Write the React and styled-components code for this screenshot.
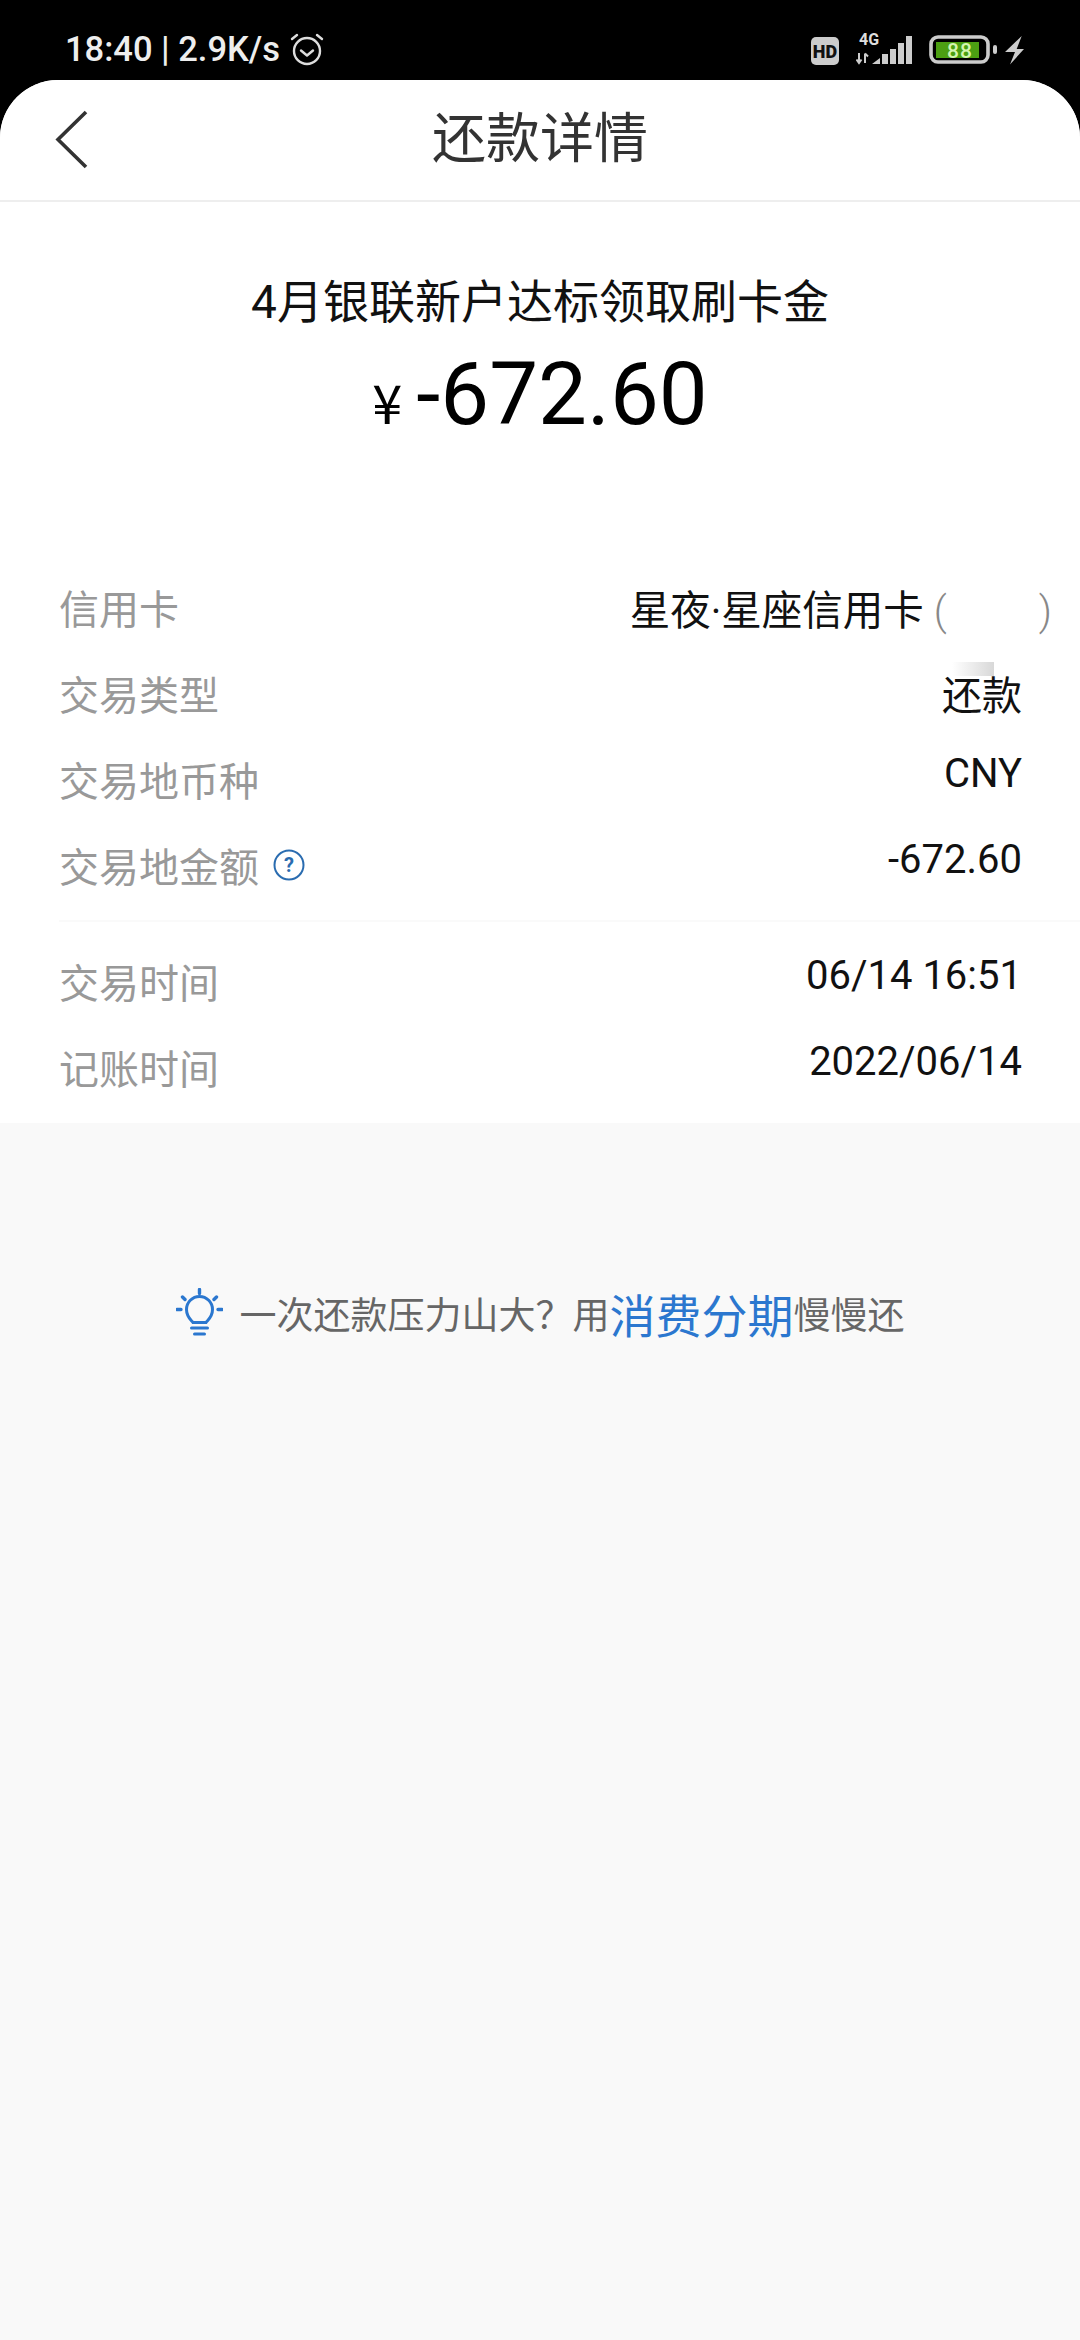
import React from "react";
import styled, { createGlobalStyle } from "styled-components";

const GlobalStyle = createGlobalStyle`
  html, body {
    margin: 0;
    padding: 0;
    background: #000;
    font-family: Roboto, "Noto Sans CJK SC", sans-serif;
  }
`;

const Page = styled.div`
  width: 1080px;
  height: 2340px;
  display: flex;
  flex-direction: column;
  background: #000;
  overflow: hidden;
`;

const StatusBar = styled.div`
  height: 80px;
  flex-shrink: 0;
  display: flex;
  align-items: center;
  justify-content: space-between;
  padding: 18px 56px 0 65px;
  box-sizing: border-box;
`;

const StatusLeft = styled.div`
  display: flex;
  align-items: center;
  gap: 9px;
  color: #eee;
  font-size: 34.5px;
  font-weight: 500;
`;

const StatusRight = styled.div`
  display: flex;
  align-items: flex-end;
  gap: 17px;
  margin-top: -6px;
`;

const Sheet = styled.div`
  flex: 1;
  display: flex;
  flex-direction: column;
  background: #f9f9f9;
  border-radius: 58px 58px 0 0;
  overflow: hidden;
`;

const Header = styled.div`
  height: 120px;
  flex-shrink: 0;
  display: grid;
  grid-template-columns: 1fr auto 1fr;
  align-items: center;
  background: #fff;
  border-bottom: 2px solid #eeeeee;
  box-sizing: content-box;
`;

const BackButton = styled.div`
  display: flex;
  padding-left: 54px;
`;

const HeaderTitle = styled.div`
  font-size: 54px;
  line-height: 120px;
  color: #333;
`;

const Card = styled.div`
  background: #fff;
  height: 921px;
  display: flex;
  flex-direction: column;
`;

const Summary = styled.div`
  height: 362px;
  flex-shrink: 0;
  display: flex;
  flex-direction: column;
  align-items: center;
  padding-top: 66px;
  box-sizing: border-box;
`;

const SummaryTitle = styled.div`
  font-size: 46px;
  line-height: 68px;
  color: #111;
`;

const Amount = styled.div`
  display: flex;
  align-items: baseline;
  gap: 14px;
  margin-top: -2px;
  color: #000;
  line-height: 120px;
`;

const Currency = styled.span`
  font-size: 54px;
  font-family: "Noto Sans CJK SC", sans-serif;
`;

const AmountValue = styled.span`
  font-size: 87px;
`;

const Row = styled.div`
  position: relative;
  height: 86px;
  display: flex;
  align-items: center;
  justify-content: space-between;
  padding: 0 ${(p) => (p.$wide ? "28px" : "58px")} 0 59px;
`;

const Label = styled.div`
  display: flex;
  align-items: center;
  gap: 14px;
  font-size: 40px;
  color: #999;
`;

const Value = styled.div`
  font-size: ${(p) => p.$size || 40}px;
  color: #111;
  padding-bottom: ${(p) => p.$lift || 0}px;
`;

const Bracket = styled.span`
  color: #888;
  font-weight: 300;
`;

const Masked = styled.span`
  display: inline-block;
  width: 92px;
`;

const Smudge = styled.div`
  position: absolute;
  top: 12px;
  right: 86px;
  width: 42px;
  height: 14px;
  background: linear-gradient(90deg, #fff, #d8d8d8);
`;

const Divider = styled.div`
  height: 2px;
  margin: 12px 0 16px 59px;
  background: #fafafa;
`;

const Tip = styled.div`
  display: flex;
  align-items: center;
  justify-content: center;
  margin-top: 158px;
  height: 64px;
  color: #666;
  font-size: 37px;
  font-family: "Noto Sans CJK SC", sans-serif;
`;

const TipIcon = styled.svg`
  margin-right: 17px;
  margin-top: -2px;
`;

const TipLink = styled.span`
  color: #2b77cf;
  font-size: 46px;
`;

const AlarmIcon = () => (
  <svg width="36" height="36" viewBox="0 0 36 36" fill="none" stroke="#ddd" strokeWidth="2.4" strokeLinecap="round" strokeLinejoin="round">
    <circle cx="18" cy="20" r="13" />
    <path d="M12 19.5l6 5 6-5" />
    <path d="M3 8l5-4M33 8l-5-4" />
  </svg>
);

const HdIcon = () => (
  <svg width="28" height="28" viewBox="0 0 28 28">
    <rect width="28" height="28" rx="5" fill="#ccc" />
    <text x="14" y="20.5" textAnchor="middle" fontFamily="Roboto, sans-serif" fontSize="18" fontWeight="900" fill="#111">HD</text>
  </svg>
);

const SignalIcon = () => (
  <svg width="56" height="38" viewBox="0 -6 56 38">
    <text x="3" y="12" fontFamily="Roboto, sans-serif" fontSize="16" fontWeight="700" fill="#ddd">4G</text>
    <path d="M3 20v10M0.5 26.5l2.5 3.5 2.5-3.5M9 30V20.5M9 20.5l3 3" fill="none" stroke="#ccc" strokeWidth="2" />
    <path d="M16 31l8-6v6zM26 21h6v10h-6zM34 16h6v15h-6zM42 10h6v21h-6zM50 3h6v28h-6z" fill="#ccc" />
  </svg>
);

const BatteryIcon = () => (
  <svg width="95" height="30" viewBox="0 0 95 30">
    <rect x="2" y="2" width="57" height="25" rx="7" fill="none" stroke="#ccc" strokeWidth="3.6" />
    <rect x="7" y="7" width="43" height="16" fill="#4c9f12" />
    <text x="31" y="22.5" textAnchor="middle" fontFamily="Roboto, sans-serif" fontSize="21" fontWeight="500" letterSpacing="1" fill="#d4f5b0">88</text>
    <rect x="64" y="10" width="4" height="9" rx="2" fill="#ccc" />
    <path d="M92.7 1L76 17h10l-5 12.5L95 14h-7.3z" fill="#ccc" />
  </svg>
);

const BackIcon = () => (
  <svg width="36" height="60" viewBox="0 0 36 60" fill="none" stroke="#333" strokeWidth="3.6">
    <path d="M32 2L4 29.5 32 57" />
  </svg>
);

const HelpIcon = () => (
  <svg width="32" height="32" viewBox="0 0 32 32">
    <circle cx="16" cy="16" r="14.5" fill="none" stroke="#2a6cb0" strokeWidth="2" />
    <text x="16" y="23" textAnchor="middle" fontFamily="Roboto, sans-serif" fontSize="20" fontWeight="700" fill="#2a6cb0">?</text>
  </svg>
);

const BulbIcon = () => (
  <TipIcon width="47" height="48" viewBox="0 0 47 48" fill="none" stroke="#2b77cf" strokeWidth="3" strokeLinecap="round">
    <path d="M17 34.5c-1-1.8-6.5-5-6.5-13a13 13 0 0 1 26 0c0 8-5.5 11.2-6.5 13z" />
    <path d="M15.5 40h16M18.5 46h10" strokeWidth="3" />
    <path d="M23.5 1.5v4M6.5 9l2.5 2.5M40.5 9l-2.5 2.5M1 21.5h4M42 21.5h4" strokeWidth="3.4" />
  </TipIcon>
);

const App = () => {
  return (
    <Page>
      <GlobalStyle />
      <StatusBar>
        <StatusLeft>
          <span>18:40 | 2.9K/s</span>
          <AlarmIcon />
        </StatusLeft>
        <StatusRight>
          <HdIcon />
          <SignalIcon />
          <BatteryIcon />
        </StatusRight>
      </StatusBar>
      <Sheet>
        <Header>
          <BackButton>
            <BackIcon />
          </BackButton>
          <HeaderTitle>还款详情</HeaderTitle>
          <div />
        </Header>
        <Card>
          <Summary>
            <SummaryTitle>4月银联新户达标领取刷卡金</SummaryTitle>
            <Amount>
              <Currency>¥</Currency>
              <AmountValue>-672.60</AmountValue>
            </Amount>
          </Summary>
          <Row $wide>
            <Label>信用卡</Label>
            <Value $size={40.5}>
              星夜·星座信用卡 <Bracket>(</Bracket>
              <Masked />
              <Bracket>)</Bracket>
            </Value>
          </Row>
          <Row>
            <Label>交易类型</Label>
            <Value>还款</Value>
            <Smudge />
          </Row>
          <Row>
            <Label>交易地币种</Label>
            <Value $lift={12}>CNY</Value>
          </Row>
          <Row>
            <Label>
              交易地金额
              <HelpIcon />
            </Label>
            <Value $lift={12}>-672.60</Value>
          </Row>
          <Divider />
          <Row>
            <Label>交易时间</Label>
            <Value $lift={12}>06/14 16:51</Value>
          </Row>
          <Row>
            <Label>记账时间</Label>
            <Value $lift={12}>2022/06/14</Value>
          </Row>
        </Card>
        <Tip>
          <BulbIcon />
          {"一次还款压力山大\uFF1F用"}
          <TipLink>消费分期</TipLink>慢慢还
        </Tip>
      </Sheet>
    </Page>
  );
};

export default App;
